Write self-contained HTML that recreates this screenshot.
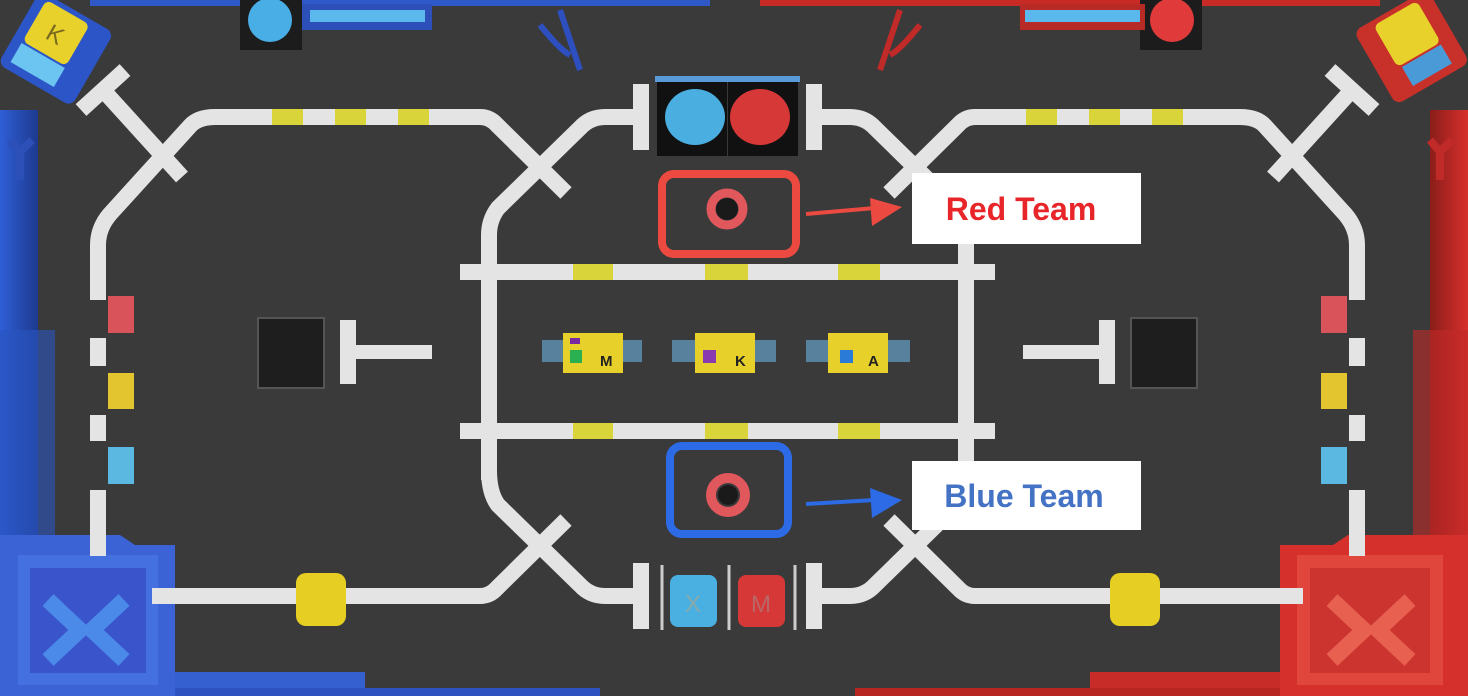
<!DOCTYPE html>
<html><head><meta charset="utf-8"><style>
html,body{margin:0;padding:0;background:#393939;}
svg{display:block}
</style></head><body>
<svg width="1468" height="696" viewBox="0 0 1468 696" xmlns="http://www.w3.org/2000/svg">
<defs>
<linearGradient id="bl" x1="0" x2="1"><stop offset="0" stop-color="#2f5ed6"/><stop offset="1" stop-color="#1d3a8f"/></linearGradient>
<linearGradient id="rd" x1="1" x2="0"><stop offset="0" stop-color="#d8302c"/><stop offset="1" stop-color="#8a1d1a"/></linearGradient>
</defs>
<rect width="1468" height="696" fill="#3a3a3a"/>

<!-- side decorations blue -->
<rect x="0" y="110" width="38" height="430" fill="url(#bl)"/>
<rect x="0" y="330" width="55" height="210" fill="#2a55c0" opacity=".6"/>
<path d="M20 150 l0 30 M10 140 l10 12 l12 -12" stroke="#2c4fb8" stroke-width="8" fill="none"/>
<path d="M0 535 H120 L135 545 H175 V696 H0 Z" fill="#3b63d6"/>
<rect x="175" y="672" width="190" height="24" fill="#3560d0"/>
<rect x="175" y="688" width="425" height="8" fill="#2e52c0"/>
<rect x="18" y="555" width="140" height="130" fill="#4470e0"/>
<rect x="30" y="568" width="116" height="105" fill="#3a55cc"/>
<path d="M48 600 L80 630 L48 660 M124 600 L92 630 L124 660" stroke="#4b8ae8" stroke-width="16" fill="none"/>
<rect x="90" y="0" width="620" height="6" fill="#2f58c8"/>
<path d="M560 10 q10 30 20 60 M540 25 q20 25 30 30" stroke="#2e4fc0" stroke-width="6" fill="none"/>
<rect x="240" y="0" width="62" height="50" fill="#1c1c1c"/>
<circle cx="270" cy="20" r="22" fill="#4aaee6"/>
<rect x="302" y="4" width="130" height="26" fill="#2c4fb8"/>
<rect x="310" y="10" width="115" height="12" fill="#5bb8ec"/>
<g transform="rotate(30 55 45)"><rect x="15" y="5" width="85" height="85" rx="8" fill="#2c55c8"/><rect x="25" y="10" width="50" height="48" rx="6" fill="#e8d12a"/><text x="50" y="44" font-family="Liberation Sans,sans-serif" font-size="24" fill="#7a6a20" text-anchor="middle">K</text><rect x="25" y="60" width="50" height="22" fill="#6cc4f0"/></g>

<!-- side decorations red -->
<rect x="1430" y="110" width="38" height="430" fill="url(#rd)"/>
<rect x="1413" y="330" width="55" height="210" fill="#c02a28" opacity=".6"/>
<path d="M1440 150 l0 30 M1430 140 l10 12 l12 -12" stroke="#c02a28" stroke-width="8" fill="none"/>
<path d="M1468 535 H1348 L1333 545 H1280 V696 H1468 Z" fill="#d6302c"/>
<rect x="1090" y="672" width="190" height="24" fill="#c82c28"/>
<rect x="855" y="688" width="425" height="8" fill="#b82622"/>
<rect x="1297" y="555" width="146" height="130" fill="#e0463c"/>
<rect x="1310" y="568" width="120" height="105" fill="#cc3430"/>
<path d="M1332 600 L1364 630 L1332 660 M1410 600 L1378 630 L1410 660" stroke="#e86050" stroke-width="16" fill="none"/>
<rect x="760" y="0" width="620" height="6" fill="#c82a26"/>
<path d="M900 10 q-10 30 -20 60 M920 25 q-20 25 -30 30" stroke="#c02a28" stroke-width="6" fill="none"/>
<rect x="1140" y="0" width="62" height="50" fill="#1c1c1c"/>
<circle cx="1172" cy="20" r="22" fill="#e03a3a"/>
<rect x="1020" y="4" width="125" height="26" fill="#b82a26"/>
<rect x="1025" y="10" width="115" height="12" fill="#5bb8ec"/>
<g transform="rotate(-30 1410 45)"><rect x="1368" y="5" width="85" height="85" rx="8" fill="#c8302a"/><rect x="1388" y="10" width="50" height="48" rx="6" fill="#e8d12a"/><rect x="1392" y="60" width="45" height="22" fill="#4a9ad8"/></g>

<!-- white lines left half -->
<g id="lines" stroke="#e4e4e4" stroke-width="16" fill="none">
<path d="M98 300 V245 Q98 228 110 214 L190 126 Q198 117 215 117 H480 Q490 117 497 125 L566 193"/>
<path d="M103 90 L182 177"/>
<path d="M81 110 L125 70"/>
<path d="M489 480 V235 Q489 220 498 208 L580 128 Q590 117 605 117 H641"/>
<path d="M641 84 V150"/>
<path d="M489 470 Q489 493 498 505 L580 585 Q590 596 605 596 H641"/>
<path d="M641 563 V629"/>
<path d="M152 596 H480 Q490 596 497 588 L566 520"/>
<path d="M348 320 V384"/>
<path d="M356 352 H432" stroke-width="14"/>
<path d="M98 338 V366 M98 415 V441 M98 490 V556"/>
</g>
<use href="#lines" transform="translate(1455 0) scale(-1 1)"/>
<g fill="#d8d43a">
<rect x="272" y="109" width="31" height="16"/><rect x="335" y="109" width="31" height="16"/><rect x="398" y="109" width="31" height="16"/>
<rect x="1026" y="109" width="31" height="16"/><rect x="1089" y="109" width="31" height="16"/><rect x="1152" y="109" width="31" height="16"/>
</g>
<!-- bars -->
<rect x="460" y="264" width="535" height="16" fill="#e4e4e4"/>
<rect x="460" y="423" width="535" height="16" fill="#e4e4e4"/>
<g fill="#d8d43a">
<rect x="573" y="264" width="40" height="16"/><rect x="705" y="264" width="43" height="16"/><rect x="838" y="264" width="42" height="16"/>
<rect x="573" y="423" width="40" height="16"/><rect x="705" y="423" width="43" height="16"/><rect x="838" y="423" width="42" height="16"/>
</g>
<!-- side blocks -->
<rect x="108" y="296" width="26" height="37" fill="#d9545a"/>
<rect x="108" y="373" width="26" height="36" fill="#e3c62f"/>
<rect x="108" y="447" width="26" height="37" fill="#5bb8e0"/>
<rect x="1321" y="296" width="26" height="37" fill="#d9545a"/>
<rect x="1321" y="373" width="26" height="36" fill="#e3c62f"/>
<rect x="1321" y="447" width="26" height="37" fill="#5bb8e0"/>
<!-- robots -->
<rect x="258" y="318" width="66" height="70" fill="#1e1e1e" stroke="#555" stroke-width="2"/>
<rect x="1131" y="318" width="66" height="70" fill="#1e1e1e" stroke="#555" stroke-width="2"/>
<!-- top cylinders -->
<rect x="657" y="78" width="70" height="78" fill="#111"/>
<rect x="728" y="78" width="70" height="78" fill="#111"/>
<ellipse cx="695" cy="117" rx="30" ry="28" fill="#4aaee0"/>
<ellipse cx="760" cy="117" rx="30" ry="28" fill="#d63838"/>
<rect x="655" y="76" width="145" height="6" fill="#5a9ad8"/>
<!-- bottom cylinders -->
<rect x="670" y="575" width="47" height="52" rx="8" fill="#4ab0e2"/>
<rect x="738" y="575" width="47" height="52" rx="8" fill="#d63838"/>
<text x="693" y="612" font-family="Liberation Sans,sans-serif" font-size="24" fill="#8aa" text-anchor="middle">X</text>
<text x="761" y="612" font-family="Liberation Sans,sans-serif" font-size="24" fill="#b66" text-anchor="middle">M</text>
<path d="M662 565 V630 M729 565 V630 M795 565 V630" stroke="#ccc" stroke-width="3"/>
<!-- yellow cubes -->
<rect x="296" y="573" width="50" height="53" rx="10" fill="#e6cf22"/>
<rect x="1110" y="573" width="50" height="53" rx="10" fill="#e6cf22"/>
<!-- center cubes -->
<g font-family="Liberation Sans,sans-serif" font-size="15" font-weight="bold" fill="#222">
<rect x="542" y="340" width="100" height="22" fill="#6ab0e0" opacity=".6"/>
<rect x="563" y="333" width="60" height="40" fill="#e8d02a"/>
<rect x="570" y="338" width="10" height="6" fill="#7a2aa0"/><rect x="570" y="350" width="12" height="13" fill="#2ab050"/>
<text x="600" y="366">M</text>
<rect x="672" y="340" width="104" height="22" fill="#6ab0e0" opacity=".6"/>
<rect x="695" y="333" width="60" height="40" fill="#e8d02a"/>
<rect x="703" y="350" width="13" height="13" fill="#8a3ab0"/>
<text x="735" y="366">K</text>
<rect x="806" y="340" width="104" height="22" fill="#6ab0e0" opacity=".6"/>
<rect x="828" y="333" width="60" height="40" fill="#e8d02a"/>
<rect x="840" y="350" width="13" height="13" fill="#2a7ad8"/>
<text x="868" y="366">A</text>
</g>
<!-- red team -->
<rect x="662" y="174" width="134" height="80" rx="12" fill="none" stroke="#ec4a40" stroke-width="8"/>
<circle cx="727" cy="209" r="16" fill="none" stroke="#e0585c" stroke-width="9"/>
<circle cx="727" cy="209" r="11" fill="#1a1a1a"/>
<path d="M806 214 L875 208" stroke="#ec4a40" stroke-width="4"/>
<path d="M870 198 L902 207 L872 226 Z" fill="#ec4a40"/>
<rect x="912" y="173" width="229" height="71" fill="#fff"/>
<text x="1021" y="220" font-family="Liberation Sans,sans-serif" font-size="32" font-weight="bold" fill="#e8262a" text-anchor="middle">Red Team</text>
<!-- blue team -->
<rect x="670" y="446" width="118" height="88" rx="12" fill="none" stroke="#2c6ae6" stroke-width="8"/>
<circle cx="728" cy="495" r="17" fill="none" stroke="#e0585c" stroke-width="10"/>
<circle cx="728" cy="495" r="10" fill="#1a1a1a"/>
<path d="M806 504 L875 500" stroke="#2c6ae6" stroke-width="4"/>
<path d="M870 488 L902 500 L872 518 Z" fill="#2c6ae6"/>
<rect x="912" y="461" width="229" height="69" fill="#fff"/>
<text x="1024" y="507" font-family="Liberation Sans,sans-serif" font-size="32" font-weight="bold" fill="#4472c4" text-anchor="middle">Blue Team</text>
</svg>
</body></html>
